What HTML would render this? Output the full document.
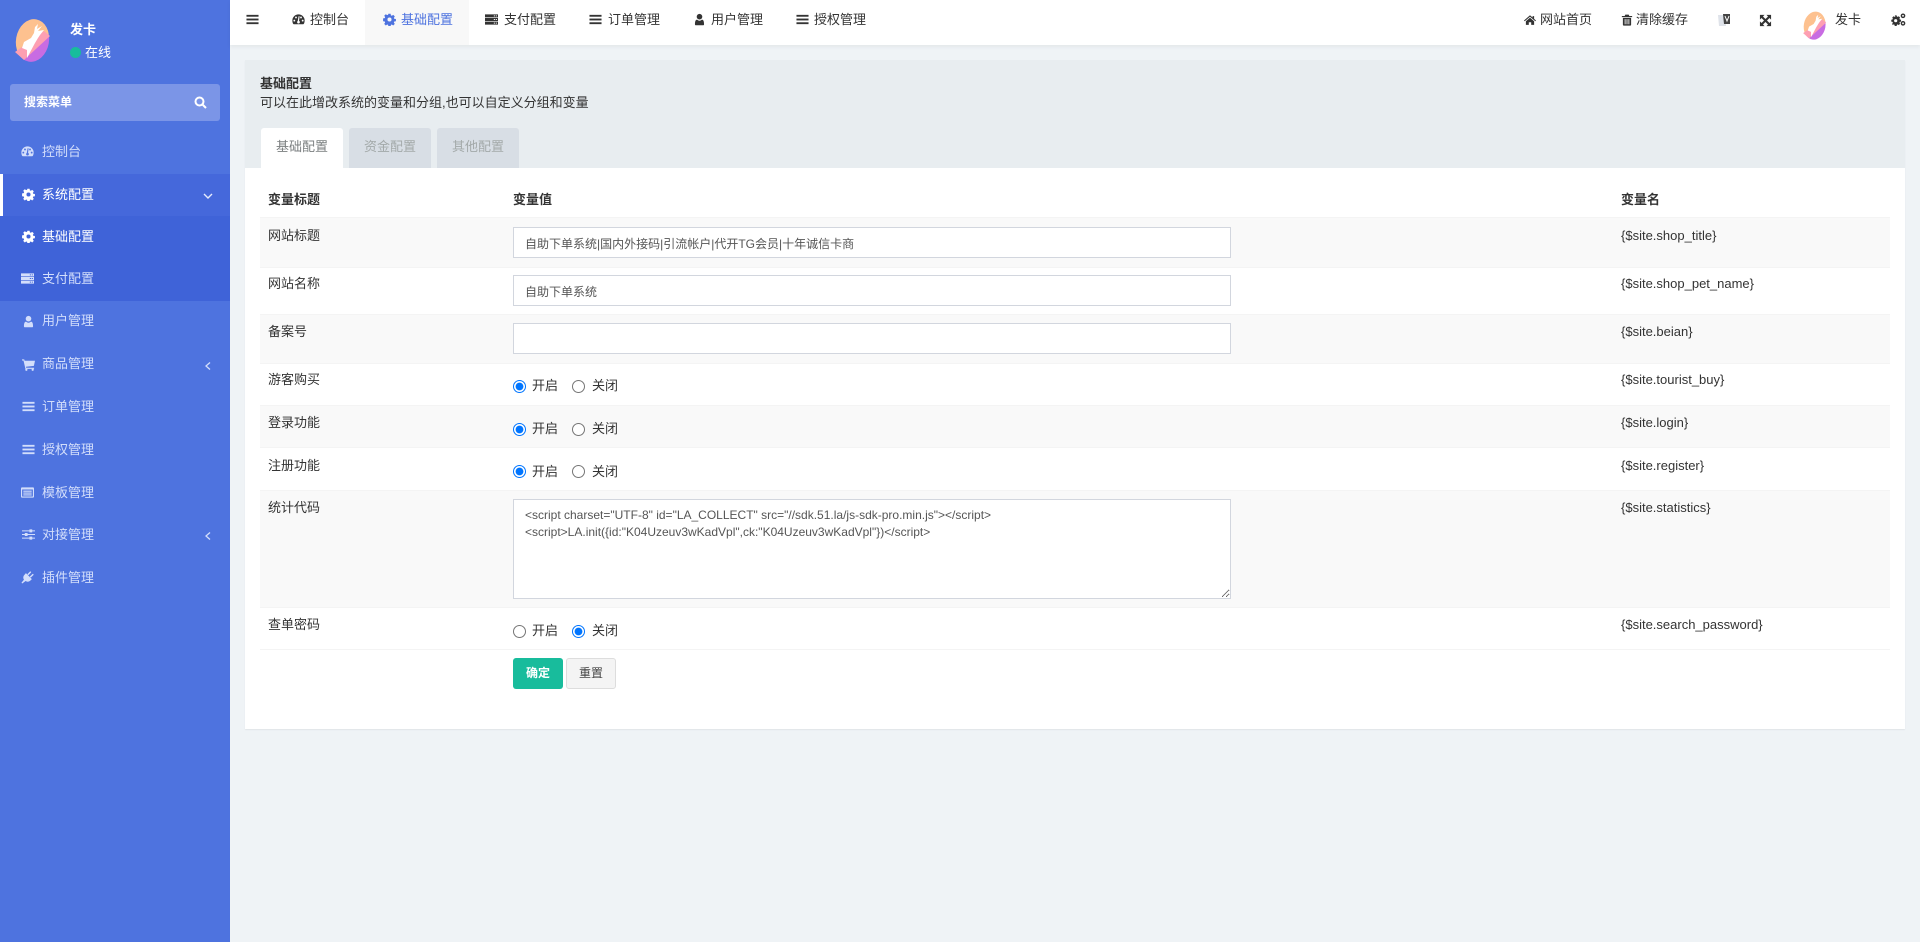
<!DOCTYPE html>
<html lang="zh-CN"><head><meta charset="utf-8"><title>基础配置</title>
<style>
*{box-sizing:border-box}
html,body{margin:0;padding:0;width:1920px;height:942px;overflow:hidden;background:#eff3f6;font:13px/20px "Liberation Sans","Noto Sans CJK SC",sans-serif;color:#333}
.b{position:absolute}
.t{position:absolute;white-space:nowrap;line-height:20px}
.i{position:absolute;width:13px;height:13px;fill:currentColor}
.r{width:12px;height:12px}
.s{color:#d3defb}
.n{color:#333}
.row{position:absolute;left:260px;width:1630px;border-top:1px solid #f4f4f4}
.odd{background:#f9f9f9}
input[type=text],textarea{position:absolute;left:513px;width:718px;border:1px solid #d2d6de;background:#fff;font:12px/17px "Liberation Sans","Noto Sans CJK SC",sans-serif;color:#555;padding:7px 11px 5px;margin:0;outline:0;border-radius:0}
input[type=radio]{position:absolute;margin:0;width:13px;height:13px;accent-color:#0075ff}
</style></head><body>
<svg width="0" height="0" style="position:absolute">
<defs>
<symbol id="bars" viewBox="0 0 14 14"><rect x=".5" y="2" width="13" height="2"/><rect x=".5" y="6" width="13" height="2"/><rect x=".5" y="10" width="13" height="2"/></symbol>
<symbol id="dash" viewBox="0 0 14 14"><path fill-rule="evenodd" d="M7 1.500A6.600 6.600 0 0 0 .4 8.300c0 1.300.3 2.400.9 3.400.2.300.4.400.7.400h10c.3 0 .5-.1.700-.4.600-1 .9-2.100.9-3.400A6.600 6.600 0 0 0 7 1.500zM2.500 7.200a1 1 0 1 1 0 2 1 1 0 0 1 0-2zM4.300 3.800a1 1 0 1 1 0 2 1 1 0 0 1 0-2zM9.700 3.800a1 1 0 1 1 0 2 1 1 0 0 1 0-2zM11.500 7.200a1 1 0 1 1 0 2 1 1 0 0 1 0-2zM8.200 3.500l-.6 5a1.500 1.500 0 1 1-1.400.1l.9-5.100z"/></symbol>
<symbol id="cog" viewBox="0 0 14 14"><path fill-rule="evenodd" d="M5.800.8h2.400l.3 1.800 1 .4 1.500-1 1.700 1.700-1 1.500.4 1 1.800.3v2.400l-1.800.3-.4 1 1 1.500-1.700 1.700-1.500-1-1 .4-.3 1.800H5.800l-.3-1.800-1-.4-1.500 1-1.700-1.700 1-1.500-.4-1-1.800-.3V5.800l1.800-.3.4-1-1-1.500L3 1.300l1.500 1 1-.4zM7 4.800a2.200 2.200 0 1 0 0 4.400 2.200 2.200 0 0 0 0-4.400z"/></symbol>
<symbol id="server" viewBox="0 0 14 14"><path fill-rule="evenodd" d="M0 1.500h14v3.200H0zM9.500 2.500v1.200h1.200V2.500zM11.600 2.500v1.200h1.200V2.500zM0 5.400h14v3.200H0zM9.500 6.400v1.200h1.200V6.400zM11.600 6.400v1.200h1.200V6.400zM0 9.300h14v3.200H0zM9.500 10.300v1.200h1.200v-1.200zM11.600 10.300v1.200h1.200v-1.200z"/></symbol>
<symbol id="user" viewBox="0 0 14 14"><circle cx="7" cy="4" r="3"/><path d="M3 13.200c-.5 0-.9-.4-.9-1 0-2.800.6-5 2.300-5 .6.700 1.500 1.100 2.600 1.100s2-.4 2.600-1.100c1.700 0 2.300 2.200 2.300 5 0 .6-.4 1-.9 1z"/></symbol>
<symbol id="cart" viewBox="0 0 14 14"><path d="M0 1.500h2.400l.4 1.500H14l-1.200 5.500-8.600.9.300 1.100h8.500v1.200H3.700L1.600 2.700H0z"/><circle cx="4.700" cy="12.600" r="1.200"/><circle cx="11.500" cy="12.600" r="1.200"/></symbol>
<symbol id="tpl" viewBox="0 0 14 14"><path fill-rule="evenodd" d="M1 1.500h12a1 1 0 0 1 1 1v9a1 1 0 0 1-1 1H1a1 1 0 0 1-1-1v-9a1 1 0 0 1 1-1zM1.200 3.800v7.500h11.600V3.800zM2.500 5h9v1.200h-9zM2.500 7h9v1.200h-9zM2.500 9h9v1.200h-9z"/></symbol>
<symbol id="sliders" viewBox="0 0 14 14"><path d="M0 2.500h8V1.500h3v1h3v1.200h-3v1H8v-1H0zM0 6.400h3v-1h3v1h8v1.200H6v1H3v-1H0zM0 10.300h8v-1h3v1h3v1.200h-3v1H8v-1H0z"/></symbol>
<symbol id="plug" viewBox="0 0 14 14"><path d="M5.300 2.300l6.400 6.400-1.500 1.500c-1.600 1.600-3.700 1.700-5.200.6L1.300 13.500l-.8-.8L3.200 9.300C2.100 7.800 2.200 5.700 3.800 4.100z"/><path d="M6.800 3.500L9.600.7c.3-.3.800-.3 1.100 0s.3.800 0 1.100L7.900 4.600zM9.400 6.100l2.800-2.800c.3-.3.800-.3 1.100 0s.3.800 0 1.100l-2.800 2.800z"/></symbol>
<symbol id="home" viewBox="0 0 14 14"><path d="M7 1.500l3 2.600V2.500h1.800v3.200L14 7.600l-.8.900L7 3.200.8 8.500 0 7.600zM7 4.400l4.800 4v4.300H8.400V9.600H5.600v3.100H2.200V8.400z"/></symbol>
<symbol id="trash" viewBox="0 0 14 14"><path fill-rule="evenodd" d="M5 .8h4l.7 1.500H13v1.400H1V2.300h3.300zM2.200 4.500h9.600v8.100a1 1 0 0 1-1 1H3.200a1 1 0 0 1-1-1zM4.300 6v6h1V6zM6.500 6v6h1V6zM8.700 6v6h1V6z"/></symbol>
<symbol id="expand" viewBox="0 0 14 14"><path d="M1 1h5L4.300 2.700 7 5.400l2.700-2.700L8 1h5v5l-1.700-1.700L8.600 7l2.700 2.700L13 8v5H8l1.700-1.700L7 8.600l-2.700 2.700L6 13H1V8l1.700 1.700L5.400 7 2.700 4.300 1 6z"/></symbol>
<symbol id="cogs" viewBox="0 0 16 14"><path fill-rule="evenodd" d="M4.500 3.500h2l.3 1.300.9.400 1.100-.7 1.400 1.400-.7 1.100.4.900 1.300.3v2l-1.300.3-.4.900.7 1.100-1.400 1.400-1.100-.7-.9.400-.3 1.300h-2l-.3-1.300-.9-.4-1.100.7L1.800 12.500l.7-1.100-.4-.9L.8 10.200v-2l1.300-.3.400-.9-.7-1.100L3.200 4.500l1.100.7.900-.4zM5.500 7.500a1.700 1.700 0 1 0 0 3.400 1.700 1.700 0 0 0 0-3.400z" transform="translate(-.5 -1.500)"/><path fill-rule="evenodd" d="M12.800 0a2.500 2.500 0 1 1 0 5 2.500 2.500 0 0 1 0-5zm0 1.500a1 1 0 1 0 0 2 1 1 0 0 0 0-2zM12.800 8a2.500 2.500 0 1 1 0 5 2.500 2.500 0 0 1 0-5zm0 1.500a1 1 0 1 0 0 2 1 1 0 0 0 0-2z"/></symbol>
<symbol id="logo" viewBox="0 0 60 70">
<clipPath id="lc"><ellipse cx="32.500" cy="40.500" rx="16.500" ry="21.500" transform="rotate(10 32.500 40.500)"/></clipPath>
<g clip-path="url(#lc)"><path d="M0 0H60V28L0 62z" fill="#fdc18f"/><path d="M0 70H60V28L0 62z" fill="#c86ce2"/></g>
<path d="M15 52L44 31l6 5-26 24z" fill="#fd9fb2"/>
<path d="M38 24L37 29 42 26 38 31 44 30 40 35 38 38 35 43 27 58 27 50 22 48 24 42 31 38 34 33 35 27z" fill="#fff"/>
</symbol>
</defs></svg>

<!-- sidebar -->
<div class="b" style="left:0;top:0;width:230px;height:942px;background:#4e73df"></div>
<div class="b" style="left:0;top:174px;width:230px;height:42px;background:#4568db"></div>
<div class="b" style="left:0;top:174px;width:3px;height:42px;background:#fff"></div>
<div class="b" style="left:0;top:216px;width:230px;height:85px;background:#3f63d8"></div>
<svg class="b" style="left:0;top:0" width="60" height="70"><use href="#logo"/></svg>
<div class="t" style="left:70px;top:20px;color:#fff;font-weight:bold">发卡</div>
<div class="b" style="left:70px;top:47px;width:11px;height:11px;border-radius:50%;background:#18bc9c"></div>
<div class="t" style="left:85px;top:43px;color:#fff">在线</div>
<div class="b" style="left:10px;top:84px;width:210px;height:37px;border-radius:3px;background:#7b95e7"></div>
<div class="t" style="left:24px;top:92px;color:#fff;font-size:12px;font-weight:bold">搜索菜单</div>
<svg class="b" style="left:194px;top:96px" width="13" height="13" viewBox="0 0 13 13" fill="none" stroke="#fff" stroke-width="2"><circle cx="5.500" cy="5.500" r="4"/><path d="M8.500 8.500l3.500 3.500"/></svg>

<svg class="i s" style="left:21px;top:145px"><use href="#dash"/></svg><div class="t s" style="left:42px;top:142px">控制台</div>
<svg class="i" style="left:22px;top:188px;color:#fff"><use href="#cog"/></svg><div class="t" style="left:42px;top:185px;color:#fff">系统配置</div>
<svg class="b" style="left:203px;top:192px" width="10" height="8" viewBox="0 0 10 8" fill="none" stroke="#e6ecfc" stroke-width="1.400"><path d="M1 2l4 4 4-4"/></svg>
<svg class="i" style="left:22px;top:230px;color:#fff"><use href="#cog"/></svg><div class="t" style="left:42px;top:227px;color:#fff">基础配置</div>
<svg class="i s" style="left:21px;top:272px"><use href="#server"/></svg><div class="t s" style="left:42px;top:269px">支付配置</div>
<svg class="i s" style="left:22px;top:315px"><use href="#user"/></svg><div class="t s" style="left:42px;top:311px">用户管理</div>
<svg class="i s" style="left:22px;top:358px"><use href="#cart"/></svg><div class="t s" style="left:42px;top:354px">商品管理</div>
<svg class="b" style="left:204px;top:361px" width="8" height="10" viewBox="0 0 8 10" fill="none" stroke="#d3defb" stroke-width="1.300"><path d="M6 1.500L2 5l4 3.500"/></svg>
<svg class="i s" style="left:22px;top:400px"><use href="#bars"/></svg><div class="t s" style="left:42px;top:397px">订单管理</div>
<svg class="i s" style="left:22px;top:443px"><use href="#bars"/></svg><div class="t s" style="left:42px;top:440px">授权管理</div>
<svg class="i s" style="left:21px;top:486px"><use href="#tpl"/></svg><div class="t s" style="left:42px;top:483px">模板管理</div>
<svg class="i s" style="left:22px;top:528px"><use href="#sliders"/></svg><div class="t s" style="left:42px;top:525px">对接管理</div>
<svg class="b" style="left:204px;top:531px" width="8" height="10" viewBox="0 0 8 10" fill="none" stroke="#d3defb" stroke-width="1.300"><path d="M6 1.500L2 5l4 3.500"/></svg>
<svg class="i s" style="left:21px;top:571px"><use href="#plug"/></svg><div class="t s" style="left:42px;top:568px">插件管理</div>

<!-- top nav -->
<div class="b" style="left:230px;top:0;width:1690px;height:45px;background:#fff;box-shadow:0 2px 4px rgba(0,0,0,.05)"></div>
<div class="b" style="left:365px;top:0;width:104px;height:45px;background:#f8f8f8"></div>
<svg class="i n" style="left:246px;top:13px"><use href="#bars"/></svg>
<svg class="i n" style="left:292px;top:13px"><use href="#dash"/></svg><div class="t n" style="left:310px;top:10px">控制台</div>
<svg class="i" style="left:383px;top:13px;color:#4e73df"><use href="#cog"/></svg><div class="t" style="left:401px;top:10px;color:#4e73df">基础配置</div>
<svg class="i n" style="left:485px;top:13px"><use href="#server"/></svg><div class="t n" style="left:504px;top:10px">支付配置</div>
<svg class="i n" style="left:589px;top:13px"><use href="#bars"/></svg><div class="t n" style="left:608px;top:10px">订单管理</div>
<svg class="i n" style="left:693px;top:13px"><use href="#user"/></svg><div class="t n" style="left:711px;top:10px">用户管理</div>
<svg class="i n" style="left:796px;top:13px"><use href="#bars"/></svg><div class="t n" style="left:814px;top:10px">授权管理</div>

<svg class="i r n" style="left:1524px;top:14px"><use href="#home"/></svg><div class="t n" style="left:1540px;top:10px">网站首页</div>
<svg class="i r n" style="left:1621px;top:14px"><use href="#trash"/></svg><div class="t n" style="left:1636px;top:10px">清除缓存</div>
<svg class="b" style="left:1717px;top:13px" width="14" height="14" viewBox="0 0 14 14"><path d="M1 2h7l1 11H2z" fill="#dfe3ea"/><path d="M6 1h7v10H7z" fill="#444"/><path d="M8 3l2 5 2-5" fill="none" stroke="#fff"/></svg>
<svg class="i n" style="left:1759px;top:14px"><use href="#expand"/></svg>
<svg class="b" style="left:1793px;top:-1px" width="40" height="46"><use href="#logo"/></svg>
<div class="t n" style="left:1835px;top:10px">发卡</div>
<svg class="b n" style="left:1891px;top:13px;fill:currentColor" width="15" height="14"><use href="#cogs"/></svg>

<!-- panel -->
<div class="b" style="left:245px;top:60px;width:1660px;height:669px;background:#fff;box-shadow:0 1px 1px rgba(0,0,0,.06)"></div>
<div class="b" style="left:245px;top:60px;width:1660px;height:108px;background:#e8edf0"></div>
<div class="t" style="left:260px;top:74px;font-weight:bold">基础配置</div>
<div class="t" style="left:260px;top:93px">可以在此增改系统的变量和分组,也可以自定义分组和变量</div>
<div class="b" style="left:261px;top:128px;width:82px;height:40px;background:#fff;border-radius:3px 3px 0 0"></div>
<div class="b" style="left:349px;top:128px;width:82px;height:40px;background:#d8dee5;border-radius:3px 3px 0 0"></div>
<div class="b" style="left:437px;top:128px;width:82px;height:40px;background:#d8dee5;border-radius:3px 3px 0 0"></div>
<div class="t" style="left:276px;top:137px;color:#7b7f80">基础配置</div>
<div class="t" style="left:364px;top:137px;color:#a3a9a9">资金配置</div>
<div class="t" style="left:452px;top:137px;color:#a3a9a9">其他配置</div>

<!-- table rows -->
<div class="row odd" style="top:217px;height:50px"></div>
<div class="row" style="top:267px;height:47px"></div>
<div class="row odd" style="top:314px;height:49px"></div>
<div class="row" style="top:363px;height:42px"></div>
<div class="row odd" style="top:405px;height:42px"></div>
<div class="row" style="top:447px;height:43px"></div>
<div class="row odd" style="top:490px;height:117px"></div>
<div class="row" style="top:607px;height:43px;border-bottom:1px solid #f4f4f4"></div>

<div class="t" style="left:268px;top:190px;font-weight:bold">变量标题</div>
<div class="t" style="left:513px;top:190px;font-weight:bold">变量值</div>
<div class="t" style="left:1621px;top:190px;font-weight:bold">变量名</div>

<div class="t" style="left:268px;top:226px">网站标题</div><div class="t" style="left:1621px;top:226px">{$site.shop_title}</div>
<div class="t" style="left:268px;top:274px">网站名称</div><div class="t" style="left:1621px;top:274px">{$site.shop_pet_name}</div>
<div class="t" style="left:268px;top:322px">备案号</div><div class="t" style="left:1621px;top:322px">{$site.beian}</div>
<div class="t" style="left:268px;top:370px">游客购买</div><div class="t" style="left:1621px;top:370px">{$site.tourist_buy}</div>
<div class="t" style="left:268px;top:413px">登录功能</div><div class="t" style="left:1621px;top:413px">{$site.login}</div>
<div class="t" style="left:268px;top:456px">注册功能</div><div class="t" style="left:1621px;top:456px">{$site.register}</div>
<div class="t" style="left:268px;top:498px">统计代码</div><div class="t" style="left:1621px;top:498px">{$site.statistics}</div>
<div class="t" style="left:268px;top:615px">查单密码</div><div class="t" style="left:1621px;top:615px">{$site.search_password}</div>

<input type="text" style="top:227px;height:31px" value="自助下单系统|国内外接码|引流帐户|代开TG会员|十年诚信卡商">
<input type="text" style="top:275px;height:31px" value="自助下单系统">
<input type="text" style="top:323px;height:31px" value="">

<input type="radio" name="a" checked style="left:513px;top:380px"><div class="t" style="left:532px;top:376px">开启</div>
<input type="radio" name="a" style="left:572px;top:380px"><div class="t" style="left:592px;top:376px">关闭</div>
<input type="radio" name="b" checked style="left:513px;top:423px"><div class="t" style="left:532px;top:419px">开启</div>
<input type="radio" name="b" style="left:572px;top:423px"><div class="t" style="left:592px;top:419px">关闭</div>
<input type="radio" name="c" checked style="left:513px;top:465px"><div class="t" style="left:532px;top:462px">开启</div>
<input type="radio" name="c" style="left:572px;top:465px"><div class="t" style="left:592px;top:462px">关闭</div>
<input type="radio" name="d" style="left:513px;top:625px"><div class="t" style="left:532px;top:621px">开启</div>
<input type="radio" name="d" checked style="left:572px;top:625px"><div class="t" style="left:592px;top:621px">关闭</div>

<textarea style="top:499px;height:100px">&lt;script charset="UTF-8" id="LA_COLLECT" src="//sdk.51.la/js-sdk-pro.min.js"&gt;&lt;/script&gt;
&lt;script&gt;LA.init({id:"K04Uzeuv3wKadVpl",ck:"K04Uzeuv3wKadVpl"})&lt;/script&gt;</textarea>

<div class="b" style="left:513px;top:658px;width:50px;height:31px;border-radius:3px;background:#18bc9c;color:#fff;font-size:12px;font-weight:bold;line-height:31px;text-align:center">确定</div>
<div class="b" style="left:566px;top:658px;width:50px;height:31px;border-radius:3px;background:#f4f4f4;border:1px solid #ddd;color:#444;font-size:12px;line-height:29px;text-align:center">重置</div>
</body></html>
